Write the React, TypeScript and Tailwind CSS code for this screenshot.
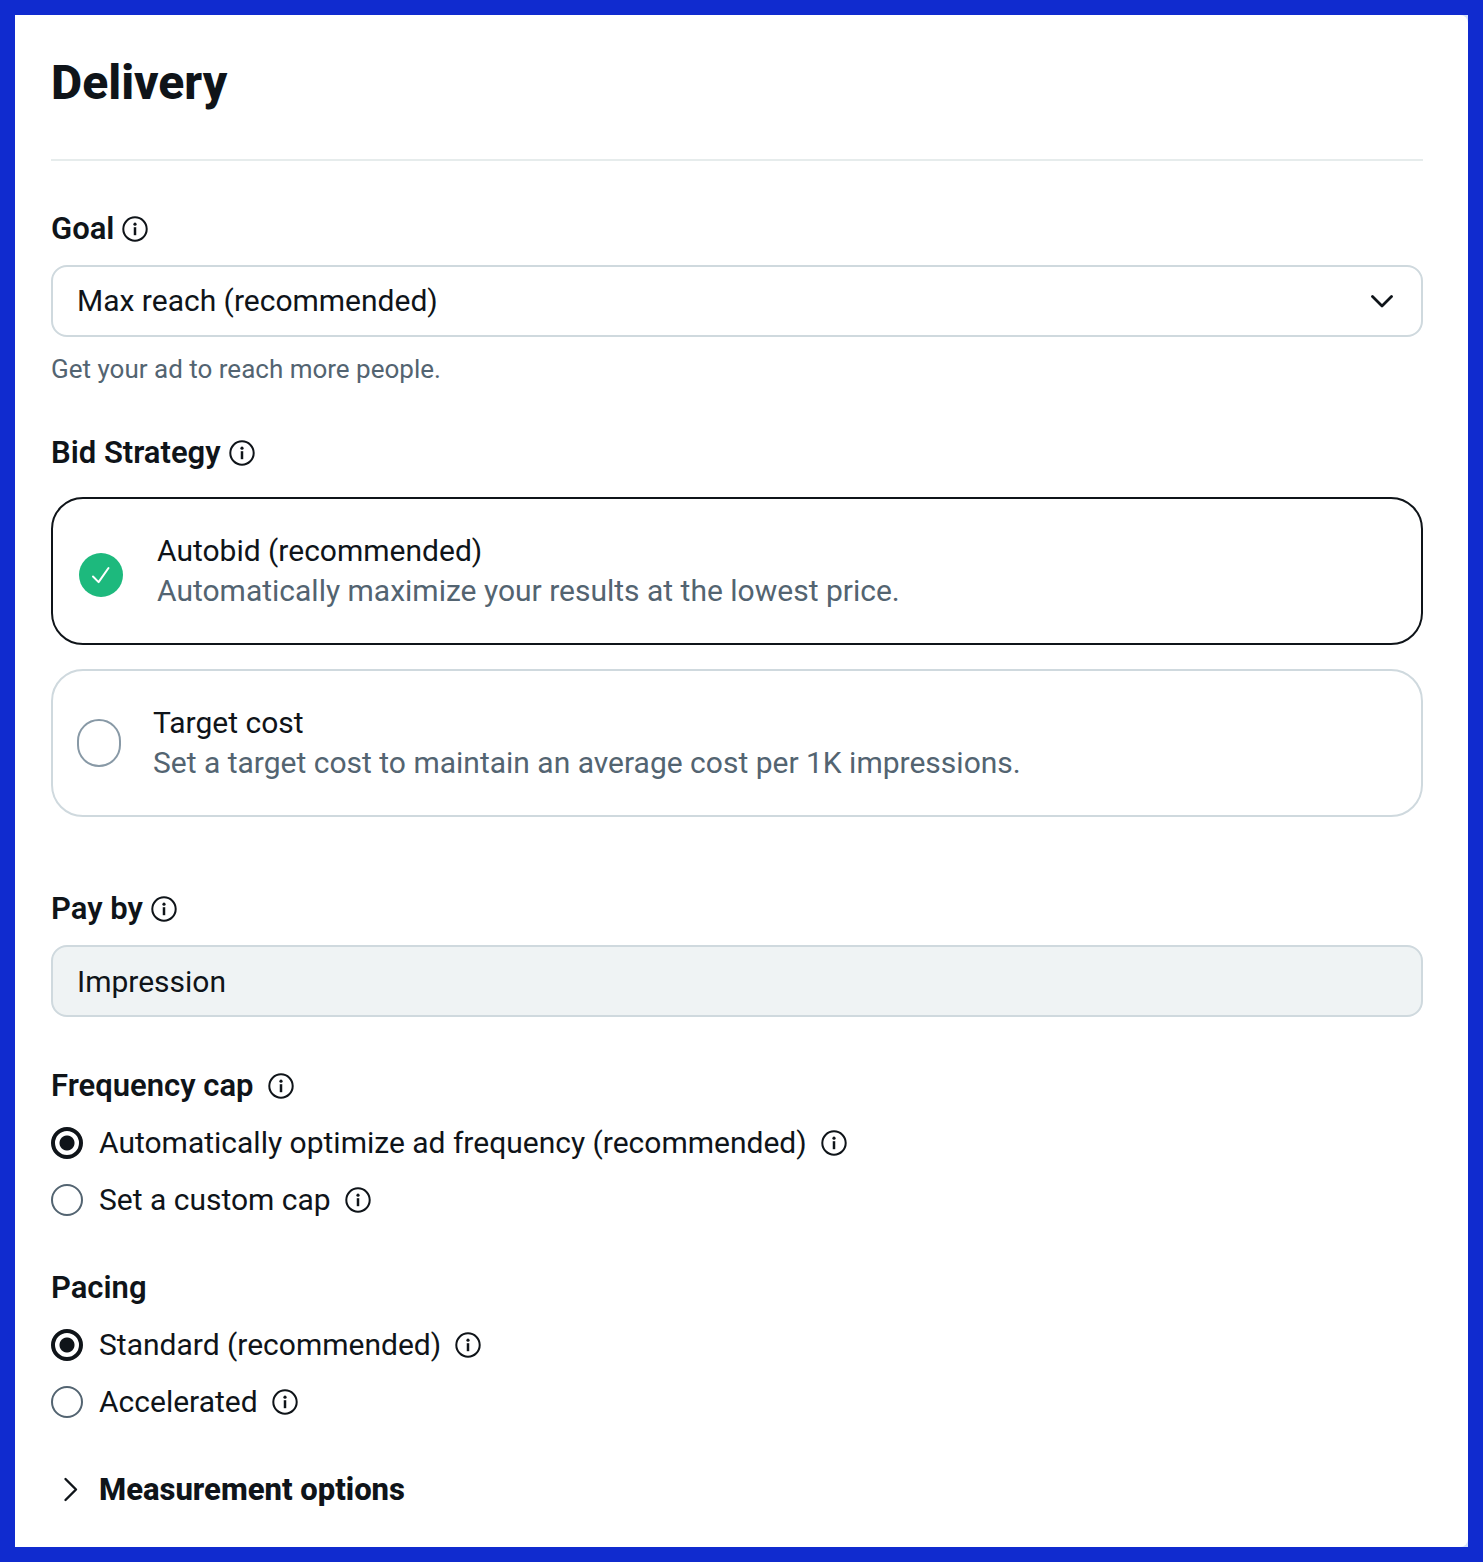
import { useState } from 'react'
import type { ReactNode } from 'react'

function InfoButton({ about }: { about: string }) {
  return (
    <button type="button" aria-label={`About ${about}`} className="shrink-0">
      <svg viewBox="0 0 26 26" className="size-[26px]" fill="none" stroke="currentColor">
        <circle cx="13" cy="13" r="11.7" strokeWidth="2" />
        <path d="M13 11.2v8" strokeWidth="2.5" />
        <circle cx="13" cy="8.2" r="1.6" fill="currentColor" stroke="none" />
      </svg>
    </button>
  )
}

type FieldLabelProps = { htmlFor: string; children: string }

function FieldLabel({ htmlFor, children }: FieldLabelProps) {
  return (
    <div className="flex items-center gap-2 text-[31px] leading-10 font-semibold">
      <label htmlFor={htmlFor}>{children}</label>
      <InfoButton about={children} />
    </div>
  )
}

type BidCardProps = {
  value: string
  title: string
  description: string
  selected: boolean
  onSelect: (value: string) => void
}

function BidCard({ value, title, description, selected, onSelect }: BidCardProps) {
  return (
    <label
      className={`flex items-center gap-8 rounded-[32px] border-2 px-6 py-8 ${
        selected ? 'border-[#0f1419]' : 'border-[#cfd9de]'
      }`}
    >
      <input
        type="radio"
        name="bid-strategy"
        value={value}
        checked={selected}
        onChange={() => onSelect(value)}
        className={selected ? 'sr-only' : 'h-12 w-11 shrink-0 appearance-none rounded-[22px] border-2 border-[#8899a6]'}
      />
      {selected && (
        <span className="flex w-12 shrink-0 justify-center pt-2">
          <svg viewBox="0 0 44 44" className="size-11" fill="none">
            <circle cx="22" cy="22" r="22" fill="#1db97d" />
            <path d="M14 23.5l5.6 5.6L29.5 15" stroke="#fff" strokeWidth="2" strokeLinecap="round" strokeLinejoin="round" />
          </svg>
        </span>
      )}
      <span className="flex flex-col">
        <span>{title}</span>
        <span className="text-[#536471]">{description}</span>
      </span>
    </label>
  )
}

type RadioGroupProps = {
  name: string
  legend: ReactNode
  options: string[]
}

function RadioGroup({ name, legend, options }: RadioGroupProps) {
  return (
    <fieldset className="mt-12">
      <legend className="flex items-center gap-3.5 text-[31px] leading-10 font-semibold">{legend}</legend>
      {options.map((option, index) => (
        <div key={option} className="mt-[17px] flex items-center gap-3.5">
          <label className="flex items-center gap-4">
            <input
              type="radio"
              name={name}
              defaultChecked={index === 0}
              className="size-8 shrink-0 appearance-none rounded-full border-2 border-[#536471] checked:border-4 checked:border-[#0f1419] checked:bg-[radial-gradient(circle,#0f1419_7px,transparent_8px)]"
            />
            {option}
          </label>
          <InfoButton about={option} />
        </div>
      ))}
    </fieldset>
  )
}

const bidStrategies = [
  {
    value: 'autobid',
    title: 'Autobid (recommended)',
    description: 'Automatically maximize your results at the lowest price.',
  },
  {
    value: 'target-cost',
    title: 'Target cost',
    description: 'Set a target cost to maintain an average cost per 1K impressions.',
  },
]

export default function App() {
  const [bidStrategy, setBidStrategy] = useState('autobid')

  return (
    <main className="min-h-screen bg-[#102bcf] p-[15px] font-['Roboto',sans-serif] text-[30px] leading-10 text-[#0f1419]">
      <div className="bg-[#d6e2f8]">
        <form className="rounded-r-lg bg-white pt-[38px] pr-[45px] pb-[37px] pl-9">
          <h1 className="text-[48px] leading-[60px] font-extrabold">Delivery</h1>
          <hr className="mt-[46px] mb-12 border-t-2 border-[#e6ecec]" />

          <FieldLabel htmlFor="goal">Goal</FieldLabel>
          <div className="relative mt-4">
            <select
              id="goal"
              className="block h-[72px] w-full appearance-none rounded-2xl border-2 border-[#cfd9de] bg-white px-6"
            >
              <option>Max reach (recommended)</option>
            </select>
            <svg
              viewBox="0 0 24 24"
              className="pointer-events-none absolute inset-y-0 right-7 my-auto size-6"
              fill="none"
              stroke="currentColor"
              strokeWidth="2.8"
              strokeLinecap="round"
              strokeLinejoin="round"
            >
              <path d="M1.5 7.5l9.5 9.5 9.5-9.5" />
            </svg>
          </div>
          <p className="mt-4 text-[26px] leading-8 text-[#536471]">Get your ad to reach more people.</p>

          <fieldset className="mt-12">
            <legend className="flex items-center gap-2 text-[31px] leading-10 font-semibold">
              Bid Strategy
              <InfoButton about="Bid Strategy" />
            </legend>
            <div className="mt-6 flex flex-col gap-6">
              {bidStrategies.map((strategy) => (
                <BidCard
                  key={strategy.value}
                  {...strategy}
                  selected={bidStrategy === strategy.value}
                  onSelect={setBidStrategy}
                />
              ))}
            </div>
          </fieldset>

          <div className="mt-[72px] mb-[49px]">
            <FieldLabel htmlFor="pay-by">Pay by</FieldLabel>
            <input
              id="pay-by"
              type="text"
              value="Impression"
              disabled
              className="mt-4 block h-[72px] w-full rounded-2xl border-2 border-[#cfd9de] bg-[#eff3f4] px-6"
            />
          </div>

          <RadioGroup
            name="frequency-cap"
            legend={
              <>
                Frequency cap
                <InfoButton about="Frequency cap" />
              </>
            }
            options={['Automatically optimize ad frequency (recommended)', 'Set a custom cap']}
          />
          <RadioGroup name="pacing" legend="Pacing" options={['Standard (recommended)', 'Accelerated']} />

          <button
            type="button"
            aria-expanded="false"
            className="mt-12 flex items-center gap-4 text-[31px] leading-10 font-extrabold"
          >
            <svg
              viewBox="0 0 32 32"
              className="size-8"
              fill="none"
              stroke="currentColor"
              strokeWidth="2.4"
              strokeLinecap="round"
              strokeLinejoin="round"
            >
              <path d="M14.5 5l10.5 10.5L14.5 26" />
            </svg>
            Measurement options
          </button>
        </form>
      </div>
    </main>
  )
}
